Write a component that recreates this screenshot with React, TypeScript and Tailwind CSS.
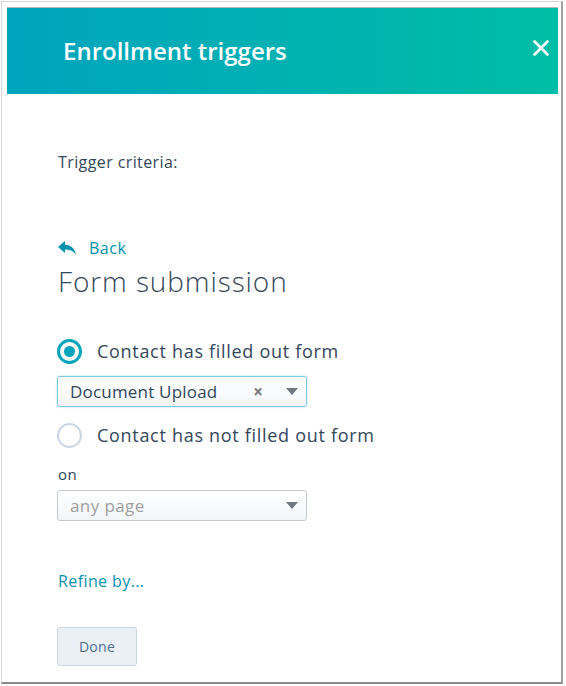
import { X } from "lucide-react";

const font = { fontFamily: "'Open Sans', Lato, sans-serif" };

function Caret() {
  return (
    <svg width="12" height="7" viewBox="0 0 12 7" className="fill-[#6f7782]">
      <path d="M0 0h12L6 7z" />
    </svg>
  );
}

export default function App() {
  return (
    <div className="w-[566px] h-[686px] bg-white pt-px pl-px" style={font}>
      <div className="w-[562px] h-[683px] border-l border-t border-[#d9d9d9] border-r-2 border-b-2 border-r-[#a0a0a0] border-b-[#8a8a8a] pl-[5px] pt-[5px] pr-[3px]">
        <div className="border-t border-[#b8b8b8]">
          <div className="h-[86px] flex items-center justify-between pl-[56px] pr-[4px] bg-gradient-to-r from-[#00a4bd] to-[#00bda5]">
            <h1 className="text-white text-[24px] font-semibold leading-[30px]">Enrollment triggers</h1>
            <X className="text-white w-[26px] h-[26px] -mt-[6px]" strokeWidth={2.5} />
          </div>

          <div className="pl-[51px] pt-[57px]">
            <p className="text-[#33475b] text-[16px] tracking-[0.4px] leading-[22px]">Trigger criteria:</p>

            <div className="mt-[64px] flex items-center gap-[13px] text-[#0091ae] text-[16px] tracking-[0.5px] leading-[22px]">
              <svg width="18" height="14" viewBox="0 0 18 14" className="fill-[#0091ae]">
                <path d="M7 0L0 6l7 6V8.5c4.5 0 8 1 11 5C17 8 13 4 7 3.8z" />
              </svg>
              <span>Back</span>
            </div>
            <h2 className="text-[#33475b] text-[28px] tracking-[0.9px] leading-[34px] mt-[5px] font-light">Form submission</h2>

            <div className="mt-[40px] -ml-px flex items-center gap-[15px] h-[26px]">
              <span className="w-[25px] h-[25px] rounded-full border-[3px] border-[#00a4bd] flex items-center justify-center">
                <span className="w-[11px] h-[11px] rounded-full bg-[#00a4bd]" />
              </span>
              <span className="text-[#33475b] text-[18px] tracking-[0.7px] leading-[24px]">Contact has filled out form</span>
            </div>

            <div className="mt-[12px] -ml-px w-[250px] h-[31px] rounded-[3px] border border-[#7fc9e0] bg-gradient-to-b from-white to-[#f2f5f8] flex items-center pl-[12px] pr-[8px] shadow-[0_0_2px_rgba(0,164,189,0.4)]">
              <span className="text-[#33475b] text-[17px] tracking-[0.2px] flex-1">Document Upload</span>
              <span className="text-[#7a7a7a] text-[17px] font-bold mr-[23px] leading-none">×</span>
              <Caret />
            </div>

            <div className="mt-[15px] -ml-px flex items-center gap-[15px] h-[26px]">
              <span className="w-[25px] h-[25px] rounded-full border-[2px] border-[#cbd6e2]" />
              <span className="text-[#33475b] text-[18px] tracking-[0.7px] leading-[24px]">Contact has not filled out form</span>
            </div>

            <p className="mt-[16px] text-[#33475b] text-[15px] tracking-[0.5px] leading-[20px]">on</p>

            <div className="mt-[6px] -ml-px w-[250px] h-[31px] rounded-[3px] border border-[#c4c9cf] bg-gradient-to-b from-white to-[#f2f5f8] flex items-center pl-[12px] pr-[8px]">
              <span className="text-[#a0a0a0] text-[17px] tracking-[0.4px] flex-1">any page</span>
              <Caret />
            </div>

            <p className="mt-[49px] text-[#0091ae] text-[16px] tracking-[0.4px] leading-[22px]">Refine by...</p>

            <button className="mt-[35px] -ml-px w-[80px] h-[39px] rounded-[3px] border border-[#cbd6e2] bg-[#eaf0f6] text-[#506e91] text-[14px] tracking-[0.3px]">
              Done
            </button>
          </div>
        </div>
      </div>
    </div>
  );
}
